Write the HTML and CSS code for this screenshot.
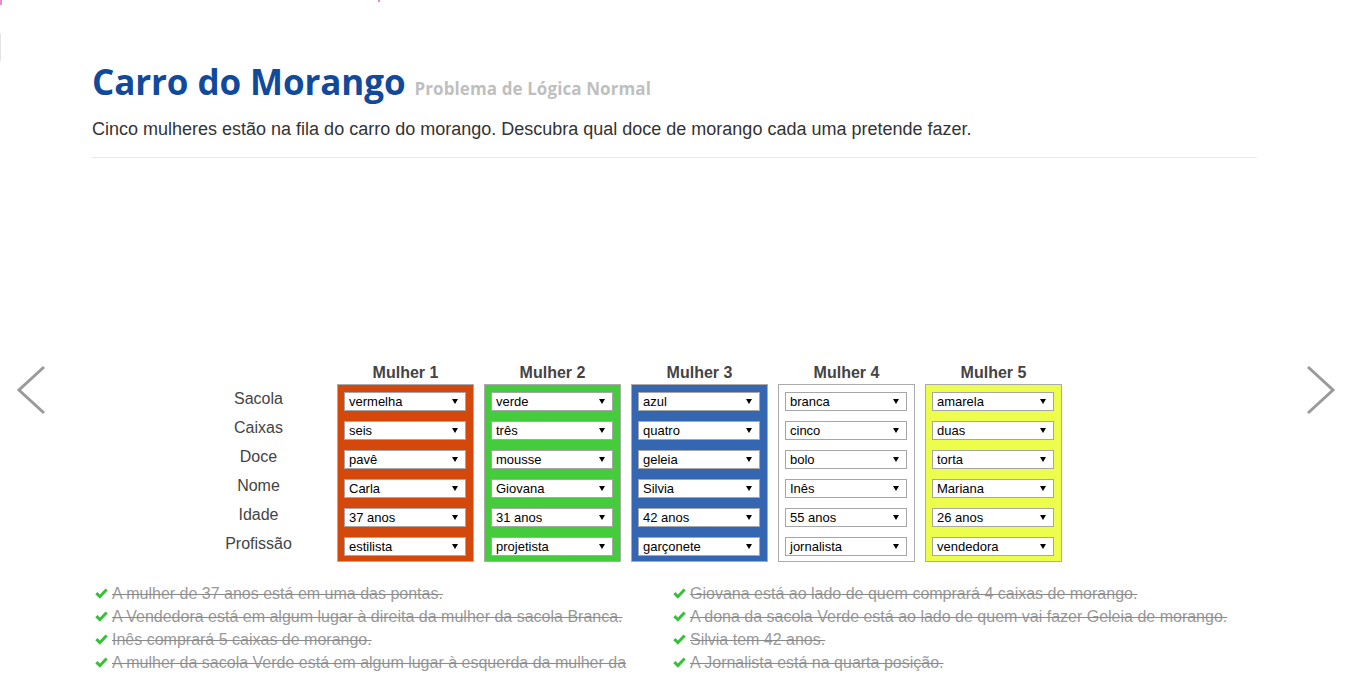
FILE: index.html
```html
<!DOCTYPE html>
<html lang="pt">
<head>
<meta charset="utf-8">
<title>Carro do Morango</title>
<link rel="stylesheet" href="styles.css">
</head>
<body>
<span class="mark mark-a"></span>
<span class="mark mark-b"></span>
<span class="mark mark-c"></span>

<main class="page">
  <header class="intro">
    <h1 class="title">Carro do Morango <small class="subtitle">Problema de Lógica Normal</small></h1>
    <p class="lead">Cinco mulheres estão na fila do carro do morango. Descubra qual doce de morango cada uma pretende fazer.</p>
  </header>
  <hr class="divider">

  <div class="spacer"></div>

  <section class="puzzle">
    <div class="col labels">
      <div class="col-head"></div>
      <div class="label-list">
        <div class="label">Sacola</div>
        <div class="label">Caixas</div>
        <div class="label">Doce</div>
        <div class="label">Nome</div>
        <div class="label">Idade</div>
        <div class="label">Profissão</div>
      </div>
    </div>

    <div class="col">
      <div class="col-head">Mulher 1</div>
      <div class="box box-red">
        <div class="sel">vermelha</div>
        <div class="sel">seis</div>
        <div class="sel">pavê</div>
        <div class="sel">Carla</div>
        <div class="sel">37 anos</div>
        <div class="sel">estilista</div>
      </div>
    </div>

    <div class="col">
      <div class="col-head">Mulher 2</div>
      <div class="box box-green">
        <div class="sel">verde</div>
        <div class="sel">três</div>
        <div class="sel">mousse</div>
        <div class="sel">Giovana</div>
        <div class="sel">31 anos</div>
        <div class="sel">projetista</div>
      </div>
    </div>

    <div class="col">
      <div class="col-head">Mulher 3</div>
      <div class="box box-blue">
        <div class="sel">azul</div>
        <div class="sel">quatro</div>
        <div class="sel">geleia</div>
        <div class="sel">Silvia</div>
        <div class="sel">42 anos</div>
        <div class="sel">garçonete</div>
      </div>
    </div>

    <div class="col">
      <div class="col-head">Mulher 4</div>
      <div class="box box-white">
        <div class="sel">branca</div>
        <div class="sel">cinco</div>
        <div class="sel">bolo</div>
        <div class="sel">Inês</div>
        <div class="sel">55 anos</div>
        <div class="sel">jornalista</div>
      </div>
    </div>

    <div class="col">
      <div class="col-head">Mulher 5</div>
      <div class="box box-yellow">
        <div class="sel">amarela</div>
        <div class="sel">duas</div>
        <div class="sel">torta</div>
        <div class="sel">Mariana</div>
        <div class="sel">26 anos</div>
        <div class="sel">vendedora</div>
      </div>
    </div>
  </section>

  <section class="clues">
    <ul class="clue-list">
      <li class="clue"><svg class="check" viewBox="0 0 13 11"><path d="M0.3 6.2 L2.4 4.1 L4.9 6.5 L10.5 0.4 L12.7 2.4 L4.9 10.8 Z"/></svg><span>A mulher de 37 anos está em uma das pontas.</span></li>
      <li class="clue"><svg class="check" viewBox="0 0 13 11"><path d="M0.3 6.2 L2.4 4.1 L4.9 6.5 L10.5 0.4 L12.7 2.4 L4.9 10.8 Z"/></svg><span>A Vendedora está em algum lugar à direita da mulher da sacola Branca.</span></li>
      <li class="clue"><svg class="check" viewBox="0 0 13 11"><path d="M0.3 6.2 L2.4 4.1 L4.9 6.5 L10.5 0.4 L12.7 2.4 L4.9 10.8 Z"/></svg><span>Inês comprará 5 caixas de morango.</span></li>
      <li class="clue"><svg class="check" viewBox="0 0 13 11"><path d="M0.3 6.2 L2.4 4.1 L4.9 6.5 L10.5 0.4 L12.7 2.4 L4.9 10.8 Z"/></svg><span>A mulher da sacola Verde está em algum lugar à esquerda da mulher da sacola Amarela.</span></li>
    </ul>
    <ul class="clue-list">
      <li class="clue"><svg class="check" viewBox="0 0 13 11"><path d="M0.3 6.2 L2.4 4.1 L4.9 6.5 L10.5 0.4 L12.7 2.4 L4.9 10.8 Z"/></svg><span>Giovana está ao lado de quem comprará 4 caixas de morango.</span></li>
      <li class="clue"><svg class="check" viewBox="0 0 13 11"><path d="M0.3 6.2 L2.4 4.1 L4.9 6.5 L10.5 0.4 L12.7 2.4 L4.9 10.8 Z"/></svg><span>A dona da sacola Verde está ao lado de quem vai fazer Geleia de morango.</span></li>
      <li class="clue"><svg class="check" viewBox="0 0 13 11"><path d="M0.3 6.2 L2.4 4.1 L4.9 6.5 L10.5 0.4 L12.7 2.4 L4.9 10.8 Z"/></svg><span>Silvia tem 42 anos.</span></li>
      <li class="clue"><svg class="check" viewBox="0 0 13 11"><path d="M0.3 6.2 L2.4 4.1 L4.9 6.5 L10.5 0.4 L12.7 2.4 L4.9 10.8 Z"/></svg><span>A Jornalista está na quarta posição.</span></li>
    </ul>
  </section>
</main>

<a class="arrow arrow-prev" href="#" aria-label="Anterior"><svg viewBox="0 0 36 56"><polyline points="30,5 5,28 30,51"/></svg></a>
<a class="arrow arrow-next" href="#" aria-label="Próximo"><svg viewBox="0 0 36 56"><polyline points="6,5 31,28 6,51"/></svg></a>
</body>
</html>
```
FILE: styles.css
```css
html, body {
  margin: 0;
  padding: 0;
  background: #fff;
}
body {
  position: relative;
  font-family: "Liberation Sans", Arial, sans-serif;
  color: #444;
  min-height: 676px;
}

.mark {
  position: absolute;
  display: block;
}
.mark-a { left: 0; top: 0; width: 2px; height: 5px; background: #e98ad9; }
.mark-b { left: 378px; top: 0; width: 2px; height: 2px; background: #e98ad9; }
.mark-c { left: 0; top: 33px; width: 1px; height: 28px; background: #e4e4e4; }

.page {
  width: 1165px;
  margin-left: 92px;
  padding-top: 62px;
}

.title {
  margin: 0;
  font-family: "Open Sans", sans-serif;
  font-weight: 700;
  font-size: 35px;
  line-height: 40px;
  color: #114a9b;
  letter-spacing: -0.1px;
}
.subtitle {
  font-family: "Open Sans", sans-serif;
  font-weight: 700;
  font-size: 17px;
  color: #bfbfbf;
  letter-spacing: 0.1px;
}

.lead {
  margin: 8px 0 0;
  font-size: 18px;
  line-height: 24px;
  color: #333;
}

.divider {
  margin: 16px 0 0;
  border: 0;
  border-top: 1px solid #e8e8e8;
  height: 0;
}

.spacer {
  height: 204px;
}

.puzzle {
  display: flex;
  gap: 10px;
  margin-left: 98px;
}
.col {
  width: 137px;
}
.col-head {
  height: 22px;
  line-height: 22px;
  text-align: center;
  font-weight: 700;
  font-size: 16px;
  color: #444;
}
.label-list {
  display: flex;
  flex-direction: column;
}
.label {
  height: 29px;
  line-height: 29px;
  text-align: center;
  font-size: 16px;
  color: #444;
}

.box {
  border: 1px solid #ababab;
  padding: 7px 7px 5px 6px;
  display: flex;
  flex-direction: column;
  gap: 10px;
}
.box-red { background: #d5480b; }
.box-green { background: #45cc3d; }
.box-blue { background: #3566b1; }
.box-white { background: #fff; }
.box-yellow { background: #edfd4b; }

.sel {
  position: relative;
  height: 19px;
  box-sizing: border-box;
  border: 1px solid #a6a6a6;
  background: #fff;
  color: #000;
  font-size: 13px;
  line-height: 17px;
  padding-left: 4px;
}
.sel::after {
  content: "";
  position: absolute;
  right: 7px;
  top: 6px;
  width: 6px;
  height: 5px;
  background: #000;
  clip-path: polygon(0 0, 100% 0, 50% 100%);
}

.clues {
  display: grid;
  grid-template-columns: 578px 1fr;
  margin-top: 20px;
}
.clue-list {
  list-style: none;
  margin: 0;
  padding: 0 20px 0 3px;
}
.clue {
  display: flex;
  align-items: flex-start;
  font-size: 16px;
  line-height: 23px;
  color: #999;
}
.clue span {
  text-decoration: line-through;
  text-decoration-color: #8a8a8a;
}
.check {
  flex: none;
  width: 13px;
  height: 11px;
  margin-top: 6px;
  margin-right: 4px;
  fill: #38c038;
}

.arrow {
  position: absolute;
  top: 362px;
  width: 36px;
  height: 56px;
  display: block;
}
.arrow svg {
  width: 36px;
  height: 56px;
  display: block;
}
.arrow polyline {
  fill: none;
  stroke: #9a9a9a;
  stroke-width: 3;
}
.arrow-prev { left: 14px; }
.arrow-next { left: 1302px; }
```
